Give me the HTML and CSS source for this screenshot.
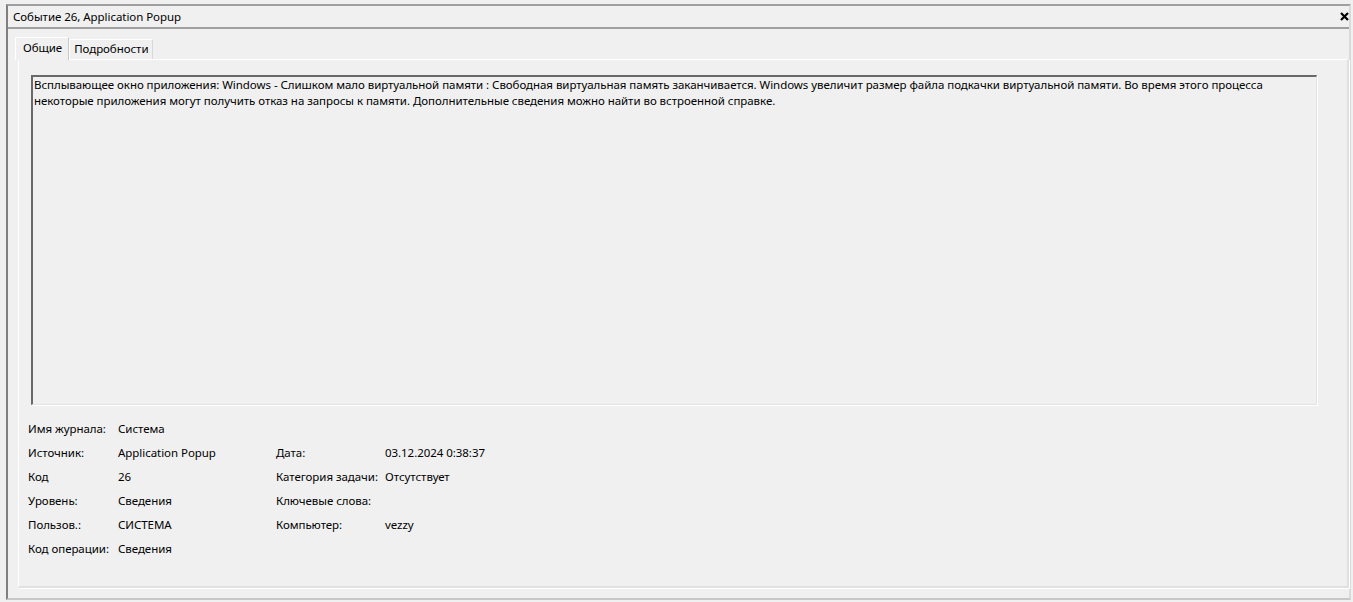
FILE: index.html
```html
<!DOCTYPE html>
<html lang="ru">
<head>
<meta charset="utf-8">
<title>Событие 26, Application Popup</title>
<link rel="stylesheet" href="styles.css">
</head>
<body>
<div class="window">
  <div class="titlebar">
    <span class="title">Событие 26, Application Popup</span>
    <svg class="close" width="9" height="9" viewBox="0 0 9 9"><path d="M1 1 L8 8 M8 1 L1 8" stroke="#000" stroke-width="2.2" fill="none"/></svg>
  </div>
  <div class="tabs">
    <div class="tab active">Общие</div>
    <div class="tab">Подробности</div>
  </div>
  <div class="panel">
    <div class="textbox">Всплывающее окно приложения: Windows - Слишком мало виртуальной памяти : Свободная виртуальная память заканчивается. Windows увеличит размер файла подкачки виртуальной памяти. Во время этого процесса некоторые приложения могут получить отказ на запросы к памяти. Дополнительные сведения можно найти во встроенной справке.</div>
    <div class="fields">
      <div class="lbl">Имя журнала:</div><div class="val">Система</div><div class="lbl"></div><div class="val"></div>
      <div class="lbl">Источник:</div><div class="val">Application Popup</div><div class="lbl">Дата:</div><div class="val">03.12.2024 0:38:37</div>
      <div class="lbl">Код</div><div class="val">26</div><div class="lbl">Категория задачи:</div><div class="val">Отсутствует</div>
      <div class="lbl">Уровень:</div><div class="val">Сведения</div><div class="lbl">Ключевые слова:</div><div class="val"></div>
      <div class="lbl">Пользов.:</div><div class="val">СИСТЕМА</div><div class="lbl">Компьютер:</div><div class="val">vezzy</div>
      <div class="lbl">Код операции:</div><div class="val">Сведения</div><div class="lbl"></div><div class="val"></div>
    </div>
  </div>
</div>
</body>
</html>
```
FILE: styles.css
```css
html, body {
  margin: 0;
  padding: 0;
  background: #f0f0f0;
}
body {
  font-family: "Noto Sans", "Liberation Sans", sans-serif;
  font-size: 11.5px;
  letter-spacing: -0.05px;
  color: #000;
  height: 602px;
  overflow: hidden;
}
.window {
  margin: 4px 0 0 6px;
  width: 1345px;
  height: 596px;
  border-top: 2px solid #a0a0a0;
  border-left: 2px solid #808080;
  border-right: 2px solid #dadada;
  border-bottom: 2px solid #c8c8c8;
  box-sizing: border-box;
  display: flex;
  flex-direction: column;
}
.titlebar {
  height: 21px;
  border-bottom: 2px solid #a0a0a0;
  display: flex;
  align-items: center;
  justify-content: space-between;
  padding: 0 0 0 5px;
}
.title {
  line-height: 21px;
}
.close {
  display: block;
}
.tabs {
  display: flex;
  align-items: flex-end;
  padding-left: 7px;
  margin-top: 8px;
  height: 22px;
  position: relative;
  z-index: 1;
}
.tab {
  height: 20px;
  line-height: 18px;
  padding: 0 3px 0 4px;
  border-top: 1px solid #fff;
  border-left: 1px solid #fff;
  border-right: 1px solid #d8d8d8;
  background: #f0f0f0;
  box-sizing: border-box;
}
.tab.active {
  height: 23px;
  line-height: 19px;
  padding: 0 6px 0 7px;
  margin-bottom: -1px;
  border-right: 1px solid #c8c8c8;
}
.panel {
  margin: 0 0 10px 10px;
  flex: 1;
  border-top: 1px solid #fff;
  border-left: 1px solid #fff;
  border-right: 2px solid #e0e0e0;
  border-bottom: 2px solid #e0e0e0;
  box-shadow: 1px 1px 0 #fff;
  padding: 15px 0 0 12px;
  box-sizing: border-box;
}
.textbox {
  width: 1286px;
  height: 330px;
  box-sizing: border-box;
  border-top: 2px solid #696969;
  border-left: 2px solid #696969;
  border-right: 1px solid #e3e3e3;
  border-bottom: 1px solid #e3e3e3;
  box-shadow: 1px 1px 0 #fff;
  padding: 0 2px 0 1px;
  line-height: 16px;
}
.fields {
  margin: 12px 0 0 -3px;
  display: grid;
  grid-template-columns: 90px 158px 109px auto;
  grid-auto-rows: 24px;
  line-height: 24px;
}
```
